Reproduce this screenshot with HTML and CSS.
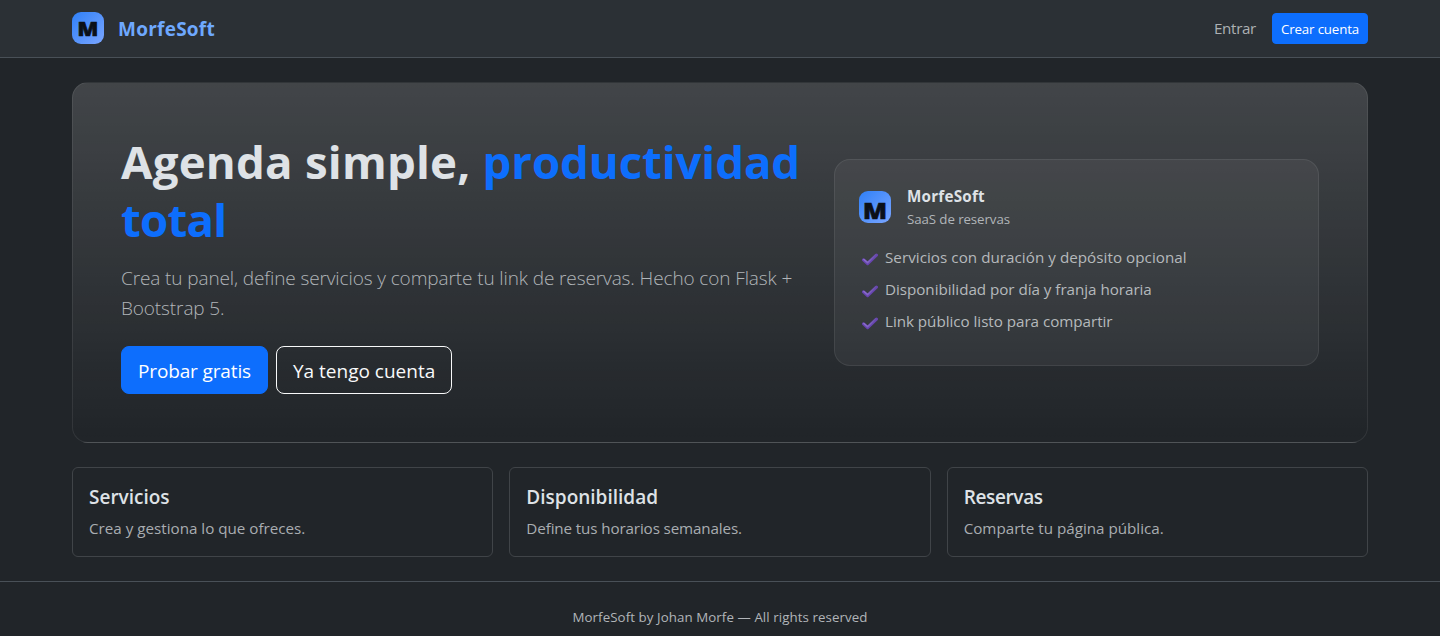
FILE: index.html
```
<!DOCTYPE html>
<html lang="es">
<head>
<meta charset="utf-8">
<title>MorfeSoft</title>
<link rel="stylesheet" href="styles.css">
</head>
<body>
<svg width="0" height="0" class="defs" aria-hidden="true">
  <defs>
    <linearGradient id="logo-bg" x1="0" y1="0" x2="1" y2="1">
      <stop offset="0" stop-color="#2f80f7"/>
      <stop offset="1" stop-color="#7aa5ff"/>
    </linearGradient>
    <linearGradient id="check-fill" x1="0" y1="0" x2="1" y2="0">
      <stop offset="0" stop-color="#8d6fce"/>
      <stop offset="1" stop-color="#6950a8"/>
    </linearGradient>
    <symbol id="check" viewBox="0 0 16 13">
      <path d="M1.6 6.9 L5.6 10.6 L14.4 2.2" fill="none" stroke="#6743b0" stroke-width="3.2" stroke-linecap="round" stroke-linejoin="round"/>
      <path d="M1.9 6.5 L5.6 9.6 L14 1.9" fill="none" stroke="url(#check-fill)" stroke-width="1.5" stroke-linecap="round" stroke-linejoin="round"/>
    </symbol>
  </defs>
</svg>
<nav class="navbar">
  <div class="container navbar-inner">
    <a class="brand" href="#">
      <svg class="logo" viewBox="0 0 32 32"><rect width="32" height="32" rx="9" fill="url(#logo-bg)"/><text class="logo-letter" x="5.6" y="24" font-size="19.5" textLength="20.8" lengthAdjust="spacingAndGlyphs">M</text></svg>
      <span class="brand-name">MorfeSoft</span>
    </a>
    <div class="nav-actions">
      <a class="nav-link" href="#">Entrar</a>
      <a class="btn btn-primary btn-sm" href="#">Crear cuenta</a>
    </div>
  </div>
</nav>
<main class="container main">
  <section class="hero">
    <div class="hero-copy">
      <h1>Agenda simple, <span class="accent">productividad <span class="accent-end">total</span></span></h1>
      <p class="lead">Crea tu panel, define servicios y comparte tu link de reservas. Hecho con Flask + Bootstrap 5.</p>
      <div class="hero-buttons">
        <a class="btn btn-primary btn-lg btn-try" href="#">Probar gratis</a>
        <a class="btn btn-outline btn-lg" href="#">Ya tengo cuenta</a>
      </div>
    </div>
    <aside class="promo">
      <div class="promo-head">
        <svg class="logo" viewBox="0 0 32 32"><rect width="32" height="32" rx="9" fill="url(#logo-bg)"/><text class="logo-letter" x="4" y="28" font-size="23.5" textLength="24" lengthAdjust="spacingAndGlyphs">M</text></svg>
        <div>
          <div class="promo-title">MorfeSoft</div>
          <div class="promo-sub">SaaS de reservas</div>
        </div>
      </div>
      <ul class="features">
        <li><svg class="check"><use href="#check"/></svg>Servicios con duración y depósito opcional</li>
        <li class="snug"><svg class="check"><use href="#check"/></svg>Disponibilidad por día y franja horaria</li>
        <li class="snug"><svg class="check"><use href="#check"/></svg>Link público listo para compartir</li>
      </ul>
    </aside>
  </section>
  <section class="cards">
    <article class="card"><h5>Servicios</h5><p>Crea y gestiona lo que ofreces.</p></article>
    <article class="card"><h5>Disponibilidad</h5><p class="snug-text">Define tus horarios semanales.</p></article>
    <article class="card"><h5 class="tight">Reservas</h5><p>Comparte tu página pública.</p></article>
  </section>
</main>
<footer class="footer">MorfeSoft by Johan Morfe — All rights reserved</footer>
</body>
</html>
```
FILE: styles.css
```
* { box-sizing: border-box; }
body {
  margin: 0;
  background: #212529;
  color: #dee2e6;
  font: 400 15.2px/24px "Open Sans", "Noto Sans", sans-serif;
}
a { color: inherit; text-decoration: none; }
h1, h5, p, ul { margin: 0; padding: 0; }
.defs { position: absolute; }

.container { width: 1296px; margin: 0 auto; }

.navbar { height: 58px; background: #2b3035; border-bottom: 1px solid #495057; }
.navbar-inner { height: 57px; display: flex; align-items: center; justify-content: space-between; }
.brand { display: flex; align-items: center; gap: 14px; padding-bottom: 1px; }
.logo { display: block; width: 32px; height: 32px; flex: none; overflow: visible; }
.logo-letter { font-family: "Open Sans", sans-serif; font-weight: 800; fill: #0b1018; stroke: #0b1018; stroke-width: .6px; }
.brand-name { color: #6ea8fe; font-size: 19px; font-weight: 700; line-height: 30px; letter-spacing: .25px; padding-top: 2px; }
.nav-actions { display: flex; align-items: center; gap: 16px; }
.nav-link { color: #adb0b3; letter-spacing: -.33px; padding-bottom: 2px; }

.btn { display: block; border: 1px solid transparent; color: #fff; text-align: center; white-space: nowrap; }
.btn-primary { background: #0d6efd; border-color: #0d6efd; }
.btn-outline { border-color: #f8f9fa; color: #f8f9fa; }
.btn-sm { width: 96px; height: 31px; font-size: 13.3px; line-height: 30px; border-radius: 4px; letter-spacing: -.15px; }
.btn-lg { height: 48px; padding: 0 16px; font-size: 19px; line-height: 49px; border-radius: 8px; }
.btn-try { letter-spacing: -.14px; }

.main { padding-top: 24px; }
.hero {
  display: flex;
  align-items: center;
  gap: 24px;
  padding: 48px;
  border: 1px solid rgba(255, 255, 255, .08);
  border-radius: 16px;
  background: linear-gradient(180deg, rgba(255, 255, 255, .15), rgba(255, 255, 255, 0));
}
.hero-copy { flex: 1; min-width: 0; }
h1 { font-size: 45.6px; font-weight: 700; line-height: 57.6px; padding-top: 2px; margin-bottom: 15px; letter-spacing: .22px; }
.accent { color: #0d6efd; letter-spacing: -.1px; }
.accent-end { letter-spacing: -.75px; }
.lead { font-size: 19px; font-weight: 300; line-height: 30px; color: #b1b5b9; letter-spacing: -.11px; margin-bottom: 23px; }
.hero-buttons { display: flex; gap: 8px; }

.promo {
  width: 485px;
  height: 207px;
  padding: 24px;
  border: 1px solid rgba(255, 255, 255, .08);
  border-radius: 16px;
  background: rgba(255, 255, 255, .05);
}
.promo-head { display: flex; align-items: center; gap: 16px; margin-bottom: 15px; }
.promo-title { font-weight: 700; letter-spacing: .25px; }
.promo-sub { font-size: 13.3px; line-height: 22px; color: #b1b5b9; letter-spacing: -.09px; }
.features { list-style: none; display: grid; gap: 8px; color: #b5b9bc; }
.features li { display: flex; align-items: center; letter-spacing: .04px; }
.features .snug { letter-spacing: -.03px; }
.check { width: 16px; height: 13px; margin: 5px 7px 0 3px; flex: none; }

.cards { display: grid; grid-template-columns: repeat(3, 1fr); gap: 16px; margin-top: 24px; }
.card { padding: 16px; border: 1px solid #404448; border-radius: 6px; }
.card h5 { font-size: 19px; font-weight: 600; line-height: 24px; padding-top: 1px; margin-bottom: 7px; }
.card .tight { letter-spacing: -.36px; }
.card p { color: #a9adb1; }
.card .snug-text { letter-spacing: -.12px; }

.footer {
  margin-top: 24px;
  padding: 25px 0 7px;
  border-top: 1px solid #495057;
  color: #b1b5b9;
  font-size: 13.3px;
  line-height: 21px;
  letter-spacing: .077px;
  text-align: center;
}
```
